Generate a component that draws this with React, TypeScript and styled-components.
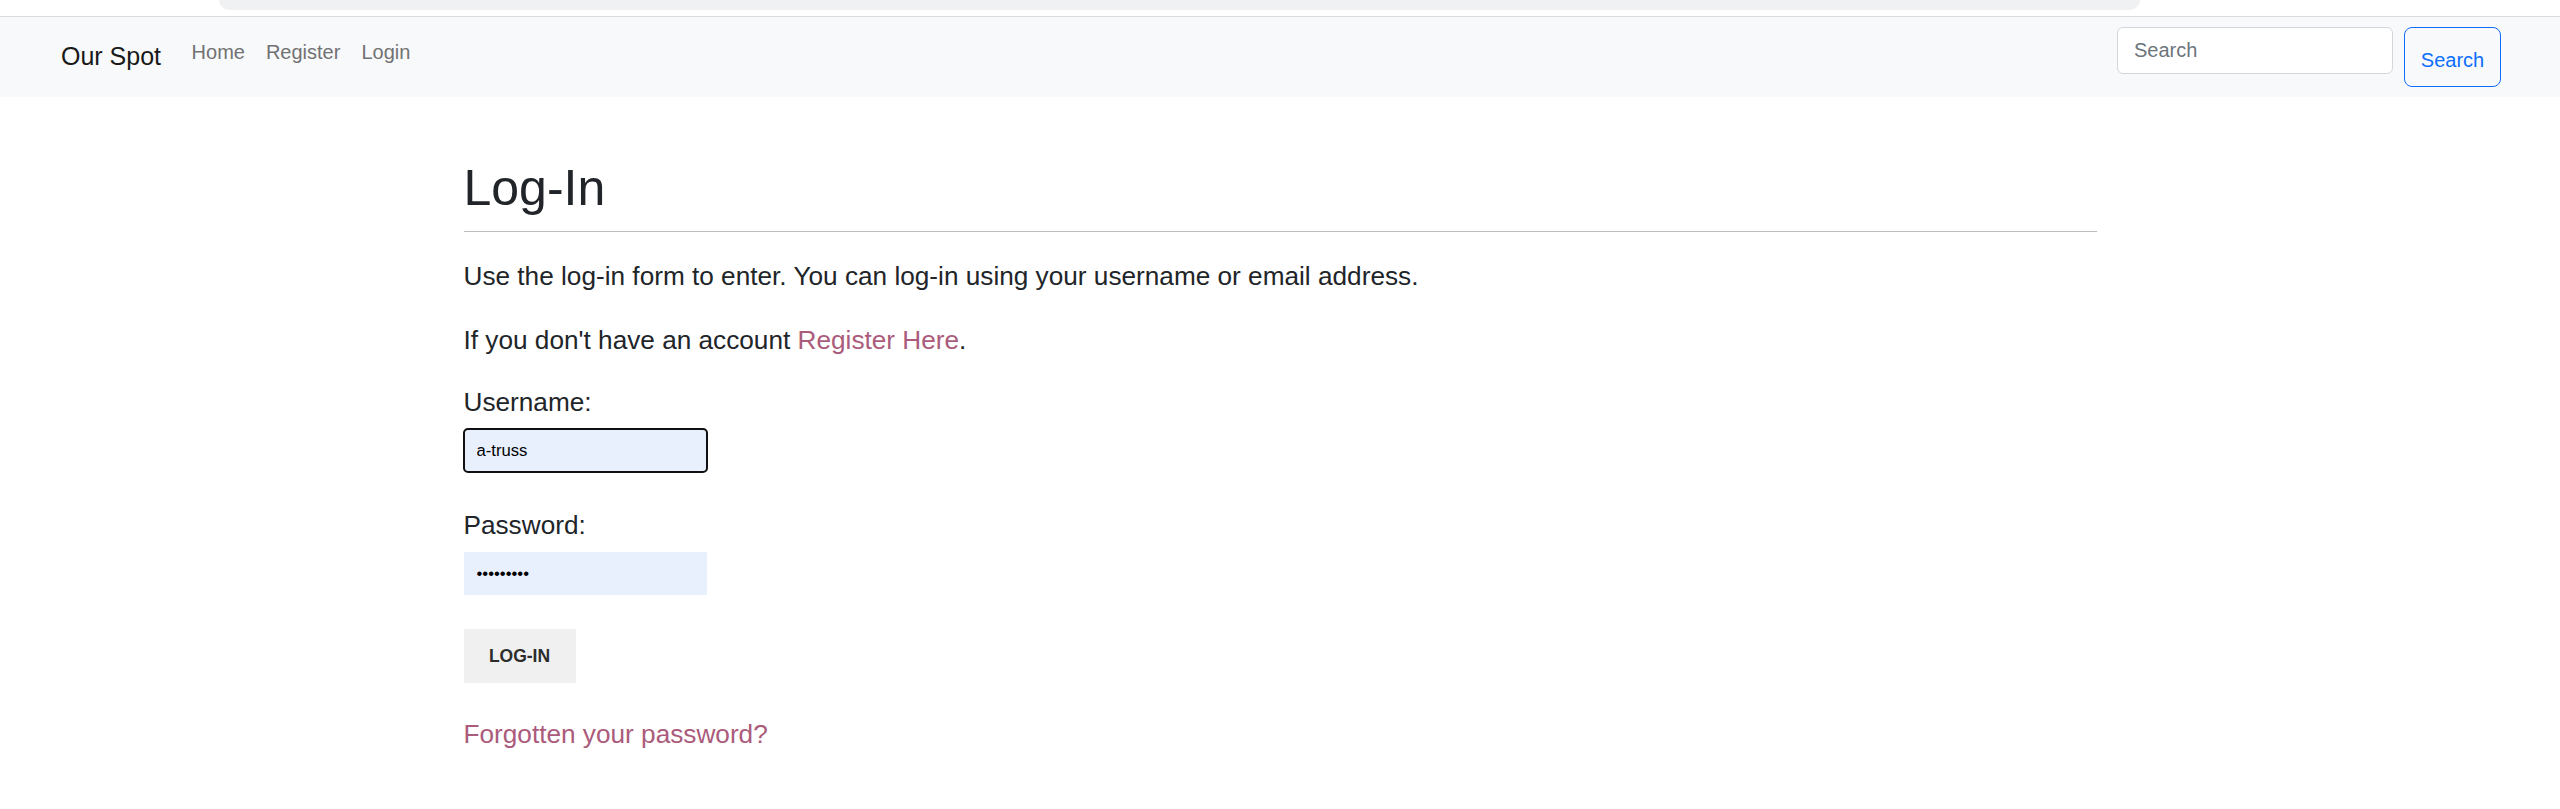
import React from 'react'
import styled, { createGlobalStyle } from 'styled-components'

const GlobalStyle = createGlobalStyle`
  html, body {
    margin: 0;
    padding: 0;
    background: #fff;
  }
  body {
    font-family: "Liberation Sans", Arial, sans-serif;
    color: #212529;
  }
  * {
    box-sizing: border-box;
  }
`

// top strip (browser chrome leftover)
const TopStrip = styled.div`
  height: 17px;
  background: #fff;
  border-bottom: 1px solid #dadcdf;
`

const TabShape = styled.div`
  margin-left: 219px;
  width: 1921px;
  height: 10px;
  background: #f0f1f3;
  border-radius: 0 0 16px 16px;
`

const Navbar = styled.nav`
  display: flex;
  align-items: center;
  justify-content: space-between;
  height: 80px;
  padding: 10px 59px 10px 61px;
  background: #f8f9fa;
`

const NavLeft = styled.div`
  display: flex;
  align-items: center;
  align-self: stretch;
`

const Brand = styled.a`
  font-size: 25px;
  line-height: 37.5px;
  padding: 6px 0;
  margin-right: 20px;
  color: #191919;
  text-decoration: none;
`

const NavLinks = styled.ul`
  display: flex;
  list-style: none;
  margin: 0;
  padding: 0;
  align-self: flex-start;
`

const NavLink = styled.a`
  display: block;
  padding: 10px 10.5px;
  font-size: 20px;
  line-height: 30px;
  color: #717273;
  text-decoration: none;
`

const SearchForm = styled.form`
  display: flex;
  align-items: flex-start;
  align-self: stretch;
  gap: 11px;
`

const SearchInput = styled.input`
  width: 276px;
  height: 47px;
  padding: 0 16px;
  font-family: inherit;
  font-size: 20px;
  color: #212529;
  background: #fff;
  border: 1px solid #d3d6da;
  border-radius: 6px;
  outline: none;
  &::placeholder {
    color: #6c757d;
  }
`

const SearchButton = styled.button`
  width: 97px;
  height: 60px;
  padding: 6px 0 0;
  font-family: inherit;
  font-size: 20px;
  color: #0d6efd;
  background: transparent;
  border: 1.5px solid #0d6efd;
  border-radius: 8px;
`

const Main = styled.main`
  width: 1633px;
  margin: 0 auto;
  padding-top: 61px;
`

const Heading = styled.h1`
  margin: 0 0 25px;
  padding-bottom: 13px;
  font-size: 50px;
  font-weight: 400;
  line-height: 60px;
  border-bottom: 1px solid #bcbcbc;
`

const Text = styled.p<{ $gap?: number }>`
  margin: 0 0 ${(p) => (p.$gap ?? 25)}px;
  font-size: 26.2px;
  line-height: 39px;
`

const Link = styled.a`
  color: #ab5b7b;
  text-decoration: none;
`

const Field = styled.div`
  margin-bottom: 34px;
`

const Label = styled.label`
  display: block;
  margin-bottom: 7px;
  font-size: 26.2px;
  line-height: 39px;
`

const Input = styled.input<{ $focused?: boolean }>`
  display: block;
  width: 243px;
  height: 43px;
  padding: 0 13px;
  font-family: inherit;
  font-size: 16.67px;
  color: #000;
  background: #e8f0fe;
  border: none;
  border-radius: ${(p) => (p.$focused ? '4px' : '0')};
  outline: ${(p) => (p.$focused ? '2px solid #101010' : 'none')};
  outline-offset: -1px;
`

const SubmitButton = styled.button`
  display: block;
  width: 112px;
  height: 54px;
  margin-bottom: 32px;
  font-family: inherit;
  font-size: 17.5px;
  font-weight: 700;
  text-transform: uppercase;
  color: #2c2c2c;
  background: #f0f0f0;
  border: none;
`

export default function App() {
  return (
    <>
      <GlobalStyle />
      <TopStrip>
        <TabShape />
      </TopStrip>
      <Navbar>
        <NavLeft>
          <Brand href="#">Our Spot</Brand>
          <NavLinks>
            <li><NavLink href="#">Home</NavLink></li>
            <li><NavLink href="#">Register</NavLink></li>
            <li><NavLink href="#">Login</NavLink></li>
          </NavLinks>
        </NavLeft>
        <SearchForm onSubmit={(e) => e.preventDefault()}>
          <SearchInput type="search" placeholder="Search" />
          <SearchButton type="submit">Search</SearchButton>
        </SearchForm>
      </Navbar>
      <Main>
        <Heading>Log-In</Heading>
        <Text>Use the log-in form to enter. You can log-in using your username or email address.</Text>
        <Text $gap={23}>
          If you don't have an account <Link href="#">Register Here</Link>.
        </Text>
        <form onSubmit={(e) => e.preventDefault()}>
          <Field>
            <Label htmlFor="username">Username:</Label>
            <Input id="username" $focused defaultValue="a-truss" />
          </Field>
          <Field>
            <Label htmlFor="password">Password:</Label>
            <Input id="password" type="password" defaultValue="123456789" />
          </Field>
          <SubmitButton type="submit">Log-In</SubmitButton>
        </form>
        <Text>
          <Link href="#">Forgotten your password?</Link>
        </Text>
      </Main>
    </>
  )
}
